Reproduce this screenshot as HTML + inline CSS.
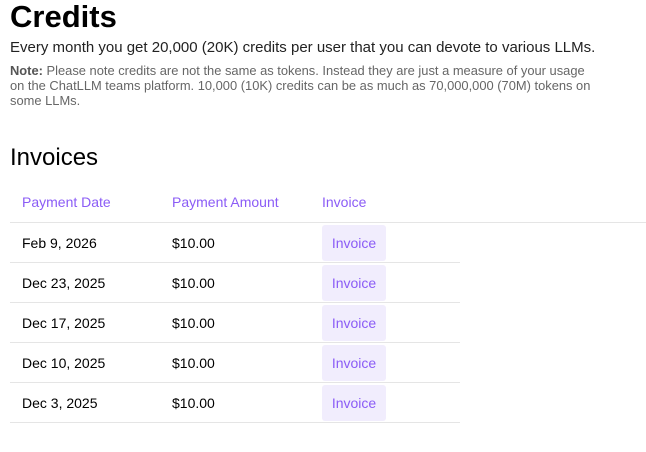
<!DOCTYPE html>
<html><head><style>
body{margin:0;width:646px;height:452px;background:#fff;font-family:"Liberation Sans",sans-serif;color:#000;position:relative;overflow:hidden}
.a{position:absolute;white-space:nowrap}
h1{position:absolute;left:10px;top:-2px;margin:0;font-size:31px;font-weight:bold;line-height:38px}
.p{left:10px;top:38px;font-size:15px;color:#222;line-height:20px}
.n{left:10px;top:63px;font-size:12.9px;color:#666;line-height:15px}
.n b{color:#555}
h2{position:absolute;left:10px;top:143px;margin:0;font-size:24px;font-weight:normal;line-height:30px}
.h{font-size:14px;color:#8b5cf6;top:194px}
.line{position:absolute;left:10px;height:1px;background:#e5e5e5}
.c{font-size:14px;top:0}
.btn{position:absolute;left:322px;width:64px;height:36px;background:#f1edfd;border-radius:3px;color:#8b5cf6;font-size:14px;text-align:center;line-height:36px}
</style></head><body>
<h1>Credits</h1>
<div class="a p">Every month you get 20,000 (20K) credits per user that you can devote to various LLMs.</div>
<div class="a n"><b>Note:</b> Please note credits are not the same as tokens. Instead they are just a measure of your usage<br>on the ChatLLM teams platform. 10,000 (10K) credits can be as much as 70,000,000 (70M) tokens on<br>some LLMs.</div>
<h2>Invoices</h2>
<div class="a h" style="left:22px">Payment Date</div>
<div class="a h" style="left:172px">Payment Amount</div>
<div class="a h" style="left:322px">Invoice</div>
<div class="line" style="top:222px;width:636px"></div>

<div class="a c" style="left:22px;top:235px">Feb 9, 2026</div><div class="a c" style="left:172px;top:235px">$10.00</div><div class="btn" style="top:225px">Invoice</div>
<div class="line" style="top:262px;width:450px"></div>
<div class="a c" style="left:22px;top:275px">Dec 23, 2025</div><div class="a c" style="left:172px;top:275px">$10.00</div><div class="btn" style="top:265px">Invoice</div>
<div class="line" style="top:302px;width:450px"></div>
<div class="a c" style="left:22px;top:315px">Dec 17, 2025</div><div class="a c" style="left:172px;top:315px">$10.00</div><div class="btn" style="top:305px">Invoice</div>
<div class="line" style="top:342px;width:450px"></div>
<div class="a c" style="left:22px;top:355px">Dec 10, 2025</div><div class="a c" style="left:172px;top:355px">$10.00</div><div class="btn" style="top:345px">Invoice</div>
<div class="line" style="top:382px;width:450px"></div>
<div class="a c" style="left:22px;top:395px">Dec 3, 2025</div><div class="a c" style="left:172px;top:395px">$10.00</div><div class="btn" style="top:385px">Invoice</div>
<div class="line" style="top:422px;width:450px"></div>
</body></html>
